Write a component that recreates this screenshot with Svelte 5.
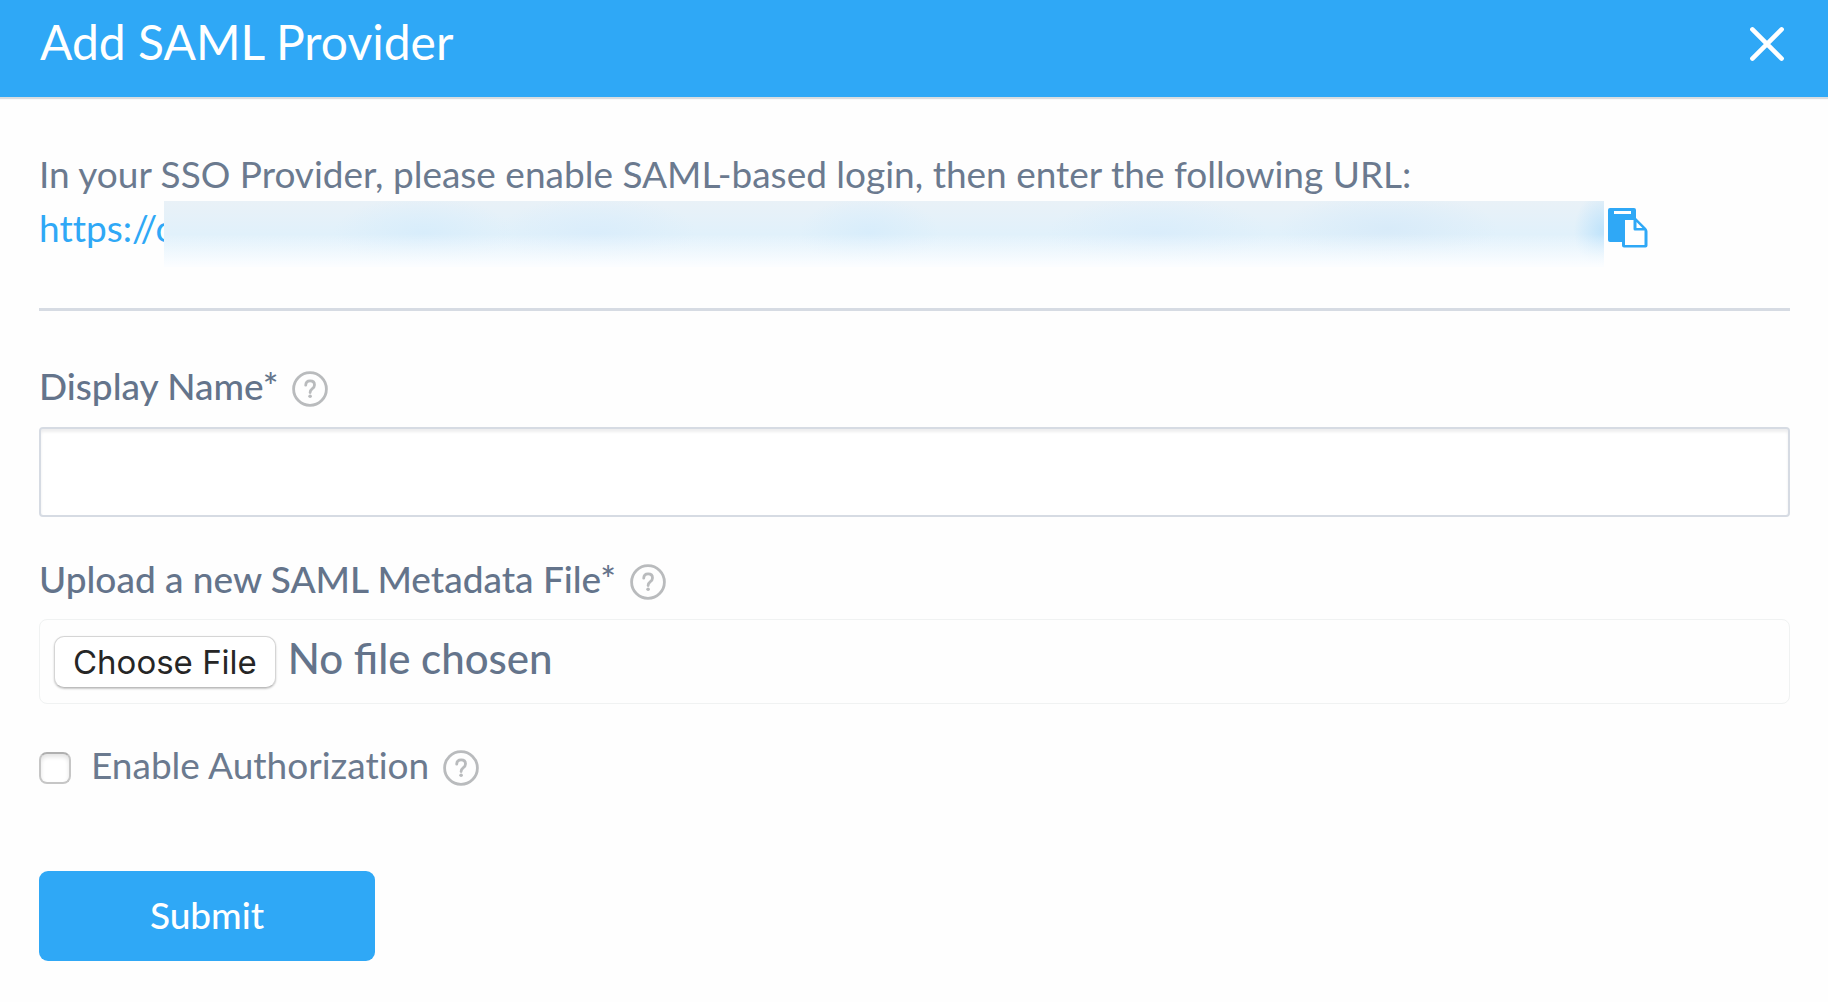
<script lang="ts">
  let displayName = $state('');
  let authorization = $state(false);
</script>

{#snippet help(label: string)}
  <button type="button" class="help" aria-label={label}>
    <svg viewBox="0 0 36 36" fill="none" stroke="#b9bbbd" stroke-linecap="round" aria-hidden="true">
      <circle cx="18" cy="18" r="16.4" stroke-width="2.8" />
      <path d="M13.700 14.200c.1-2.700 1.900-4.300 4.400-4.300 2.600 0 4.400 1.600 4.400 4 0 1.900-1 2.900-2.400 3.900-1.500 1.100-2 1.900-2 3.700" stroke-width="2.800" />
      <circle cx="18.100" cy="25.200" r="1.800" fill="#b9bbbd" stroke="none" />
    </svg>
  </button>
{/snippet}

<section class="dialog" aria-labelledby="dialog-title">
  <header>
    <h1 id="dialog-title">Add SAML Provider</h1>
    <button type="button" class="close" aria-label="Close">
      <svg viewBox="0 0 36 36" fill="none" stroke="#fff" stroke-width="4.600" stroke-linecap="round" aria-hidden="true">
        <path d="M3.400 3.400 32.600 32.600M32.600 3.400 3.400 32.600" />
      </svg>
    </button>
  </header>

  <form onsubmit={(e) => e.preventDefault()}>
    <p class="intro">In your SSO Provider, please enable SAML-based login, then enter the following URL:</p>
    <div class="url">
      <a href="#url">https://c</a>
      <span class="redacted"></span>
      <button type="button" class="copy" aria-label="Copy URL">
        <svg viewBox="0 0 40 40" aria-hidden="true">
          <path fill="#2fa8f6" d="M2 0h24a2 2 0 0 1 2 2v8l10 10q1.500 1.500 1.500 3.500V37.500a2 2 0 0 1-2 2H16a2 2 0 0 1-2-2V34H2a2 2 0 0 1-2-2V2a2 2 0 0 1 2-2Z" />
          <path fill="#fff" d="M6 3h17v3H6ZM17 12h8.500v9a1.500 1.500 0 0 0 1.500 1.500h9.500V37H17ZM28.500 14l6 6h-6Z" />
        </svg>
      </button>
    </div>

    <hr />

    <div class="label-row">
      <label for="display-name">Display Name*</label>
      {@render help('About the display name')}
    </div>
    <input id="display-name" class="text" type="text" bind:value={displayName} />

    <div class="label-row">
      <label for="metadata">Upload a new SAML Metadata File*</label>
      {@render help('About the metadata file')}
    </div>
    <input id="metadata" class="file" type="file" />

    <div class="check-row">
      <input id="authorization" type="checkbox" bind:checked={authorization} />
      <label for="authorization">Enable Authorization</label>
      {@render help('About authorization')}
    </div>

    <button type="submit" class="submit">Submit</button>
  </form>
</section>

<style>
  :global(body) {
    margin: 0;
    background: #fefefe;
  }
  .dialog,
  .dialog * {
    box-sizing: border-box;
  }
  .dialog {
    font-family: Lato, 'Open Sans', sans-serif;
    font-size: 37px;
    line-height: 54px;
    font-variant-ligatures: none;
    color: #6b7a8f;
  }
  header {
    display: flex;
    align-items: center;
    justify-content: space-between;
    padding: 6px 43px 19px 40px;
    background: #2fa8f6;
    box-shadow: 0 2px 1px #d9dde0;
  }
  h1 {
    margin: 0;
    font-size: 48px;
    line-height: 72px;
    font-weight: 400;
    color: #fff;
  }
  button {
    margin: 0;
    padding: 0;
    border: 0;
    background: none;
    font: inherit;
    color: inherit;
    cursor: pointer;
  }
  svg {
    display: block;
    width: 100%;
    height: 100%;
  }
  .close {
    width: 36px;
    height: 36px;
    margin-top: 4px;
  }
  form {
    padding: 50px 38px 40px 39px;
  }
  .intro {
    margin: 0;
  }
  .url {
    display: flex;
    align-items: center;
    padding-right: 142px;
    height: 54px;
  }
  a {
    color: #2fa8f6;
    text-decoration: none;
  }
  .redacted {
    flex: 1;
    height: 66px;
    margin: 12px 0 0 -9px;
    background:
      linear-gradient(to bottom, transparent 50%, #fbfdff 98%),
      radial-gradient(90px 36px at 18% 48%, #d8edfb, transparent),
      radial-gradient(100px 36px at 30% 48%, #daedfb, transparent),
      radial-gradient(70px 36px at 49% 48%, #d8edfb, transparent),
      radial-gradient(110px 36px at 69% 48%, #daedfb, transparent),
      radial-gradient(110px 36px at 85% 42%, #d8ebf9, transparent),
      radial-gradient(30px 40px at 100% 46%, #bfe3fb, transparent),
      linear-gradient(to bottom, #e9f1f7, #e1f1fb 50%, #e2f2fd);
  }
  .copy {
    width: 40px;
    height: 40px;
    margin-left: 4px;
  }
  hr {
    height: 3px;
    margin: 53px 0 50px;
    border: 0;
    background: #d6dbe3;
  }
  .label-row,
  .check-row {
    display: flex;
    align-items: center;
    height: 50px;
  }
  .label-row {
    font-weight: 500;
    color: #64748b;
  }
  .help {
    width: 36px;
    height: 36px;
    margin: 5px 0 0 14px;
  }
  .text {
    display: block;
    width: 100%;
    height: 90px;
    margin: 16px 0 37px;
    padding: 0 16px;
    border: 2px solid #d6dbe3;
    border-radius: 4px;
    background: #fff;
    box-shadow: inset 0 3px 3px #eeeeef;
    font: inherit;
    color: inherit;
    outline: none;
  }
  .file {
    display: block;
    width: 100%;
    height: 85px;
    margin: 15px 0 36px;
    padding: 13px 14px;
    border: 1px solid #f0f2f2;
    border-radius: 8px;
    font: inherit;
    font-size: 42px;
    font-weight: 500;
    font-variant-ligatures: normal;
    line-height: 50px;
    color: #64748b;
  }
  .file::file-selector-button {
    height: 52px;
    margin: 0 12px 0 0;
    padding: 0 18px;
    border: 1px solid #d5d5d5;
    border-bottom-color: #bdbdbd;
    border-radius: 10px;
    background: #fff;
    box-shadow: 0 1px 2px #c8c8c8;
    font-family: Inter, sans-serif;
    font-size: 33px;
    font-weight: 400;
    color: #262626;
  }
  .check-row {
    margin-bottom: 81px;
  }
  .check-row input {
    appearance: none;
    width: 32px;
    height: 32px;
    margin: 5px 20px 0 0;
    border: 2px solid #c6c6c6;
    border-top-color: #b0b0b0;
    border-radius: 8px;
    background: #fff;
    box-shadow: inset 0 3px 4px #e4e4e4;
  }
  .check-row input:checked {
    background: #2fa8f6;
  }
  .submit {
    display: block;
    width: 336px;
    height: 90px;
    padding-bottom: 3px;
    border-radius: 9px;
    background: #2fa8f6;
    color: #fff;
    font-weight: 500;
  }
</style>
